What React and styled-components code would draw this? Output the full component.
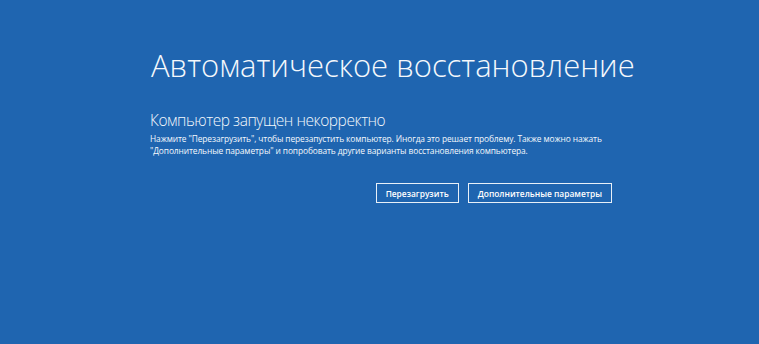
import React from "react";
import styled, { createGlobalStyle } from "styled-components";

const GlobalStyle = createGlobalStyle`
  html, body {
    margin: 0;
    padding: 0;
    background: #1f65b0;
  }
`;

const Screen = styled.div`
  width: 759px;
  height: 344px;
  background: #1f65b0;
  color: #ffffff;
  font-family: "Open Sans", "Noto Sans", sans-serif;
  padding: 44px 0 0 150px;
  box-sizing: border-box;
  overflow: hidden;
`;

const Content = styled.div`
  width: 462px;
  display: flex;
  flex-direction: column;
`;

const Title = styled.h1`
  margin: 0 0 0 1px;
  font-size: 31px;
  font-weight: 300;
  line-height: 42px;
  white-space: nowrap;
  color: #f4f8fc;
`;

const Subtitle = styled.h2`
  margin: 24px 0 0 0;
  font-size: 15.5px;
  font-weight: 300;
  letter-spacing: -0.45px;
  line-height: 20px;
  white-space: nowrap;
  color: #f4f8fc;
`;

const Message = styled.p`
  margin: 3px 0 0 0;
  font-size: 8.4px;
  letter-spacing: -0.1px;
  line-height: 12px;
  white-space: nowrap;
  color: #f4f8fc;
`;

const Actions = styled.div`
  display: flex;
  justify-content: flex-end;
  gap: 9px;
  margin-top: 26px;
`;

const Button = styled.button`
  height: 20px;
  padding: 0 9px;
  background: transparent;
  border: 1px solid #e8f0f8;
  color: #ffffff;
  font-family: inherit;
  font-size: 8.4px;
  font-weight: 600;
  cursor: pointer;
`;

export default function App() {
  return (
    <>
      <GlobalStyle />
      <Screen>
        <Content>
          <Title>Автоматическое восстановление</Title>
          <Subtitle>Компьютер запущен некорректно</Subtitle>
          <Message>
            Нажмите "Перезагрузить", чтобы перезапустить компьютер. Иногда это решает проблему. Также можно нажать
            <br />
            "Дополнительные параметры" и попробовать другие варианты восстановления компьютера.
          </Message>
          <Actions>
            <Button>Перезагрузить</Button>
            <Button>Дополнительные параметры</Button>
          </Actions>
        </Content>
      </Screen>
    </>
  );
}
